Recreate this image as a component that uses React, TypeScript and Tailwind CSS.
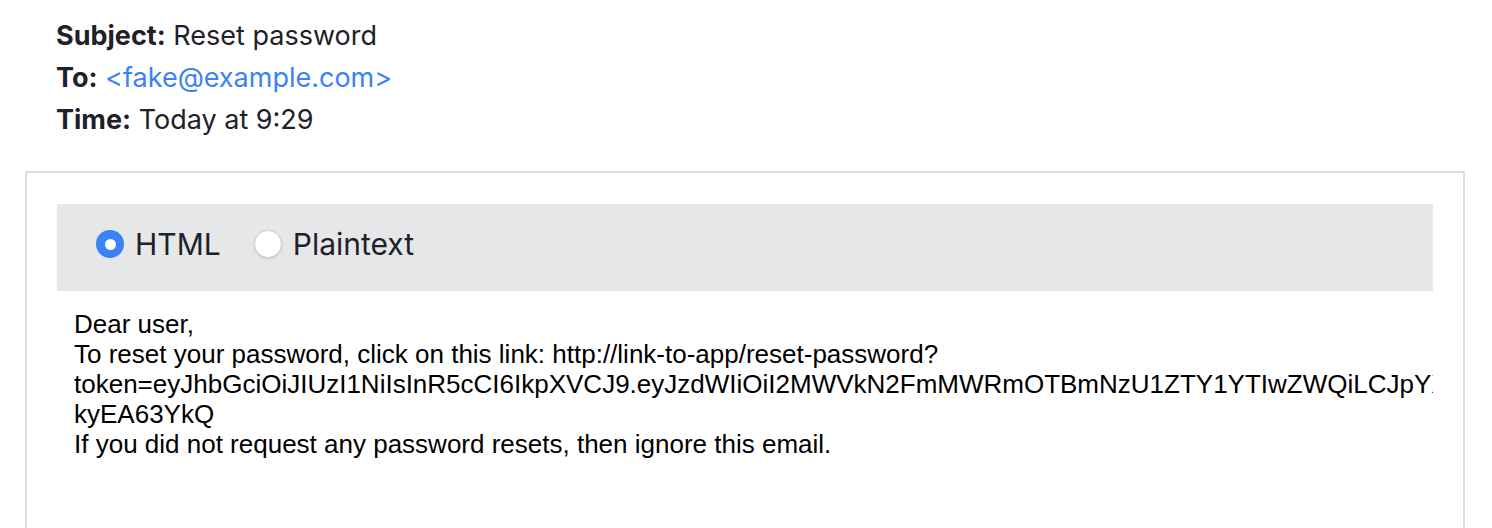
export default function App() {
  const token =
    "token=eyJhbGciOiJIUzI1NiIsInR5cCI6IkpXVCJ9.eyJzdWIiOiI2MWVkN2FmMWRmOTBmNzU1ZTY1YTIwZWQiLCJpYXQiOjE2NDMwMjA5MzksImV4cCI6MTY0MzAyNDUzOX0.";

  return (
    <div className="w-[1492px] h-[528px] overflow-hidden bg-white font-['Inter',sans-serif] text-[#1f2128]">
      <div className="pt-[15px] pl-[56px] text-[27px] leading-[42px]">
        <div>
          <span className="font-bold">Subject:</span> Reset password
        </div>
        <div>
          <span className="font-bold">To:</span>{" "}
          <span className="text-[#3b82f6]">&lt;fake@example.com&gt;</span>
        </div>
        <div>
          <span className="font-bold">Time:</span> Today at 9:29
        </div>
      </div>

      <div className="mt-[30px] ml-[25px] w-[1440px] h-[400px] border-2 border-[#dedde6] px-[30px] pt-[31px]">
        <div className="h-[87px] bg-[#e6e7e9] flex items-center pl-[39px] pb-[7px] gap-[33px] text-[30px]">
          <label className="flex items-center gap-[11px]">
            <span className="w-[28px] h-[28px] rounded-full bg-[#3b82f6] flex items-center justify-center">
              <span className="w-[11px] h-[11px] rounded-full bg-white" />
            </span>
            <span>HTML</span>
          </label>
          <label className="flex items-center gap-[11px]">
            <span className="w-[28px] h-[28px] rounded-full bg-white border border-[#cfcfd4] shadow-sm" />
            <span>Plaintext</span>
          </label>
        </div>

        <div className="overflow-hidden pl-[17px] pt-[18px] font-['Liberation_Sans',Arial,sans-serif] text-[26px] leading-[30px] text-black">
          <div>Dear user,</div>
          <div>To reset your password, click on this link: http://link-to-app/reset-password?</div>
          <div className="whitespace-nowrap">{token}</div>
          <div>kyEA63YkQ</div>
          <div>If you did not request any password resets, then ignore this email.</div>
        </div>
      </div>
    </div>
  );
}
